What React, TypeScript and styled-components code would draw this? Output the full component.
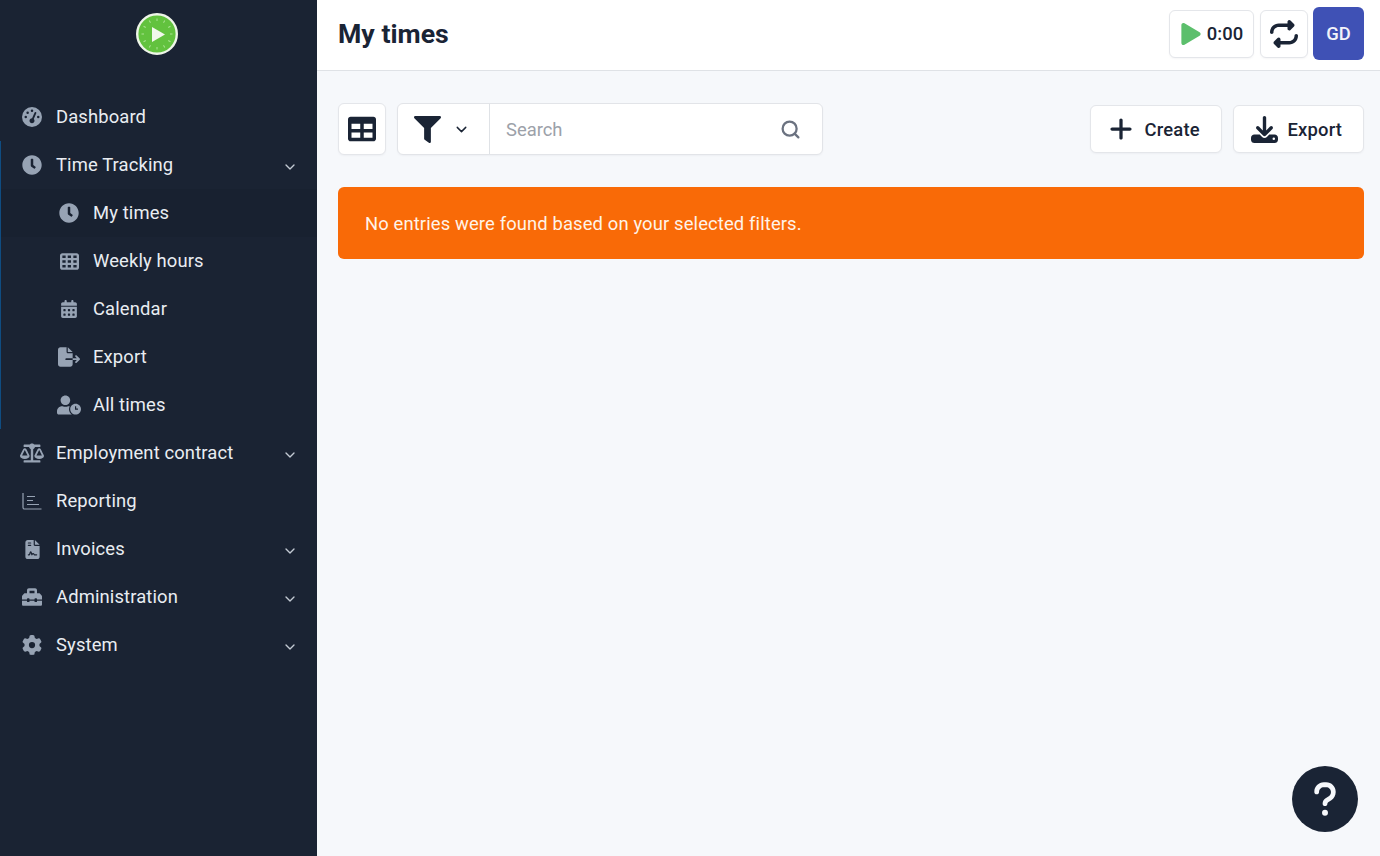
import React from 'react'
import styled, { createGlobalStyle } from 'styled-components'
import { ChevronDown, Search } from 'lucide-react'
import { FaClock, FaPlay, FaTable, FaToolbox, FaUserClock, FaBalanceScale, FaFilter } from 'react-icons/fa'
import { FaCalendarDays, FaDownload, FaFileContract, FaFileExport, FaGaugeHigh, FaGear, FaPlus, FaQuestion, FaRepeat, FaTableCells } from 'react-icons/fa6'

const GlobalStyle = createGlobalStyle`
  html, body {
    margin: 0;
    height: 100%;
    background: #f6f8fb;
    font-family: Roboto, "Liberation Sans", sans-serif;
  }
  * { box-sizing: border-box; }
`

const ChartIcon = () => (
  <svg width="20" height="18" viewBox="0 0 20 18" fill="none" stroke="currentColor" strokeWidth="1.2">
    <path d="M1 1v14.5a1.5 1.5 0 0 0 1.5 1.5H19.5" />
    <path d="M5 4.5h8M5 8.5h6M5 12.5h12" />
  </svg>
)

const ticks = Array.from({ length: 12 }, (_, i) => i * 30)

const Logo = () => (
  <svg width="42" height="42" viewBox="0 0 42 42">
    <circle cx="21" cy="21" r="19.8" fill="#62c23e" stroke="#eef5e8" strokeWidth="2.4" />
    {ticks.map(a => (
      <path key={a} d="M21 5.5v2.5" stroke="#a9e292" strokeWidth="1" transform={`rotate(${a} 21 21)`} />
    ))}
    <path d="M16 14 29 21.5 16 29z" fill="#f2f8ec" />
  </svg>
)

function App() {
  return (
    <>
      <GlobalStyle />
      <Page>
        <Sidebar>
          <LogoBox>
            <Logo />
          </LogoBox>
          <Nav>
            <NavItem icon={<FaGaugeHigh size={20} />} label="Dashboard" />
            <Group>
              <NavItem icon={<FaClock size={20} />} label="Time Tracking" arrow />
              <NavItem sub active icon={<FaClock size={20} />} label="My times" />
              <NavItem sub icon={<FaTableCells size={19} />} label="Weekly hours" />
              <NavItem sub icon={<FaCalendarDays size={18} />} label="Calendar" />
              <NavItem sub icon={<FaFileExport size={22} />} label="Export" />
              <NavItem sub icon={<FaUserClock size={24} />} label="All times" />
            </Group>
            <NavItem icon={<FaBalanceScale size={24} />} label="Employment contract" arrow />
            <NavItem icon={<ChartIcon />} label="Reporting" />
            <NavItem icon={<FaFileContract size={19} />} label="Invoices" arrow />
            <NavItem icon={<FaToolbox size={20} />} label="Administration" arrow />
            <NavItem icon={<FaGear size={20} />} label="System" arrow />
          </Nav>
        </Sidebar>
        <Main>
          <Header>
            <Title>My times</Title>
            <HeaderActions>
              <TimerButton>
                <FaPlay size={22} color="#5cbf6c" />
                0:00
              </TimerButton>
              <SwapButton>
                <FaRepeat size={28} />
              </SwapButton>
              <Avatar>GD</Avatar>
            </HeaderActions>
          </Header>
          <Content>
            <Toolbar>
              <ToolGroup>
                <ViewButton>
                  <FaTable size={28} />
                </ViewButton>
                <SearchBox>
                  <FilterButton>
                    <FaFilter size={27} />
                    <ChevronDown size={17} strokeWidth={2} />
                  </FilterButton>
                  <SearchInput placeholder="Search" />
                  <SearchIcon>
                    <Search size={21} strokeWidth={2.6} />
                  </SearchIcon>
                </SearchBox>
              </ToolGroup>
              <ToolGroup>
                <ActionButton $width={132}>
                  <ActionIcon>
                    <FaPlus size={26} />
                  </ActionIcon>
                  Create
                </ActionButton>
                <ActionButton $width={131}>
                  <ActionIcon>
                    <FaDownload size={27} />
                  </ActionIcon>
                  Export
                </ActionButton>
              </ToolGroup>
            </Toolbar>
            <Alert>No entries were found based on your selected filters.</Alert>
          </Content>
          <HelpButton>
            <FaQuestion size={38} />
          </HelpButton>
        </Main>
      </Page>
    </>
  )
}

const NavItem = ({ icon, label, arrow, sub, active }: { icon: React.ReactNode; label: string; arrow?: boolean; sub?: boolean; active?: boolean }) => (
  <Row $sub={sub} $active={active}>
    <IconBox>{icon}</IconBox>
    <Label>{label}</Label>
    {arrow && (
      <Arrow>
        <ChevronDown size={16} strokeWidth={2} />
      </Arrow>
    )}
  </Row>
)

export default App

const Page = styled.div`
  display: flex;
  width: 1380px;
  height: 856px;
  overflow: hidden;
`

const Sidebar = styled.aside`
  width: 317px;
  flex-shrink: 0;
  background: #1a2333;
`

const LogoBox = styled.div`
  display: flex;
  justify-content: center;
  height: 93px;
  padding: 13px 3px 0 0;
`

const Nav = styled.nav`
  display: flex;
  flex-direction: column;
`

const Group = styled.div`
  border-left: 1px solid #0f4c81;
`

const Row = styled.div<{ $sub?: boolean; $active?: boolean }>`
  display: flex;
  align-items: center;
  height: 48px;
  padding-left: ${p => (p.$sub ? '54px' : '17px')};
  padding-right: 19px;
  background: ${p => (p.$active ? '#182130' : 'transparent')};
  color: #e9edf2;
  ${Group} > & {
    padding-left: ${p => (p.$sub ? '53px' : '16px')};
  }
`

const IconBox = styled.span`
  display: flex;
  align-items: center;
  justify-content: center;
  width: 30px;
  margin-right: 9px;
  color: #97a3b4;
`

const Label = styled.span`
  flex: 1;
  font-size: 18.4px;
  line-height: 24px;
  letter-spacing: 0.13px;
`

const Arrow = styled.span`
  display: flex;
  margin-top: 3px;
  color: #c3cad3;
`

const Main = styled.main`
  position: relative;
  flex: 1;
  display: flex;
  flex-direction: column;
  background: #f6f8fb;
`

const Header = styled.header`
  display: flex;
  align-items: center;
  justify-content: space-between;
  height: 71px;
  padding: 0 16px 3px 21px;
  background: #fff;
  border-bottom: 1px solid #dfe2e6;
`

const Title = styled.h1`
  margin: 0;
  font-size: 26.7px;
  font-weight: 700;
  color: #1a2435;
`

const HeaderActions = styled.div`
  display: flex;
  align-items: center;
  gap: 5px;
`

const OutlineButton = styled.button`
  display: flex;
  align-items: center;
  justify-content: center;
  height: 48px;
  padding: 0;
  background: #fff;
  border: 1px solid #e4e6ea;
  border-radius: 6px;
  color: #1a2435;
  font-family: inherit;
  box-shadow: 0 1px 2px rgba(20, 30, 50, 0.04);
`

const TimerButton = styled(OutlineButton)`
  width: 85px;
  gap: 5px;
  margin-right: 1px;
  font-size: 18.4px;
  font-weight: 500;
  letter-spacing: 0.13px;
`

const SwapButton = styled(OutlineButton)`
  width: 48px;
`

const Avatar = styled.div`
  display: flex;
  align-items: center;
  justify-content: center;
  width: 51px;
  height: 53px;
  background: #3f51b5;
  border-radius: 6px;
  color: #f2f3fa;
  font-size: 18.4px;
  font-weight: 500;
`

const Content = styled.div`
  display: flex;
  flex-direction: column;
  padding: 32px 16px 0 21px;
`

const Toolbar = styled.div`
  display: flex;
  align-items: center;
  justify-content: space-between;
  height: 52px;
`

const ToolGroup = styled.div`
  display: flex;
  align-items: center;
  gap: 11px;
`

const ViewButton = styled(OutlineButton)`
  width: 48px;
  height: 52px;
`

const SearchBox = styled.div`
  display: flex;
  align-items: center;
  width: 426px;
  height: 52px;
  background: #fff;
  border: 1px solid #e2e4e8;
  border-radius: 6px;
  box-shadow: 0 1px 2px rgba(20, 30, 50, 0.04);
`

const FilterButton = styled.div`
  display: flex;
  align-items: center;
  gap: 12px;
  width: 92px;
  height: 100%;
  padding-left: 16px;
  border-right: 1px solid #dfe2e6;
  color: #1a2435;
`

const SearchInput = styled.input`
  flex: 1;
  min-width: 0;
  height: 100%;
  padding: 0 16px;
  border: 0;
  outline: 0;
  background: transparent;
  font-family: inherit;
  font-size: 18.4px;
  color: #1a2435;
  &::placeholder {
    color: #9ca1a9;
    opacity: 1;
  }
`

const SearchIcon = styled.span`
  display: flex;
  margin-right: 21px;
  color: #6b7280;
`

const ActionButton = styled(OutlineButton)<{ $width: number }>`
  width: ${p => p.$width}px;
  justify-content: flex-start;
  padding-left: 8px;
  font-size: 18.4px;
  font-weight: 500;
  letter-spacing: 0.2px;
`

const ActionIcon = styled.span`
  display: flex;
  justify-content: center;
  width: 44px;
  margin-right: 1.5px;
`

const Alert = styled.div`
  display: flex;
  align-items: center;
  height: 72px;
  margin-top: 32px;
  padding: 0 27px;
  background: #f96a07;
  border-radius: 6px;
  color: #fff3e8;
  font-size: 18.4px;
  letter-spacing: 0.13px;
`

const HelpButton = styled.button`
  position: absolute;
  right: 22px;
  bottom: 24px;
  display: flex;
  align-items: center;
  justify-content: center;
  width: 66px;
  height: 66px;
  padding: 0;
  border: 0;
  border-radius: 50%;
  background: #1a2435;
  color: #f6f8fb;
`
